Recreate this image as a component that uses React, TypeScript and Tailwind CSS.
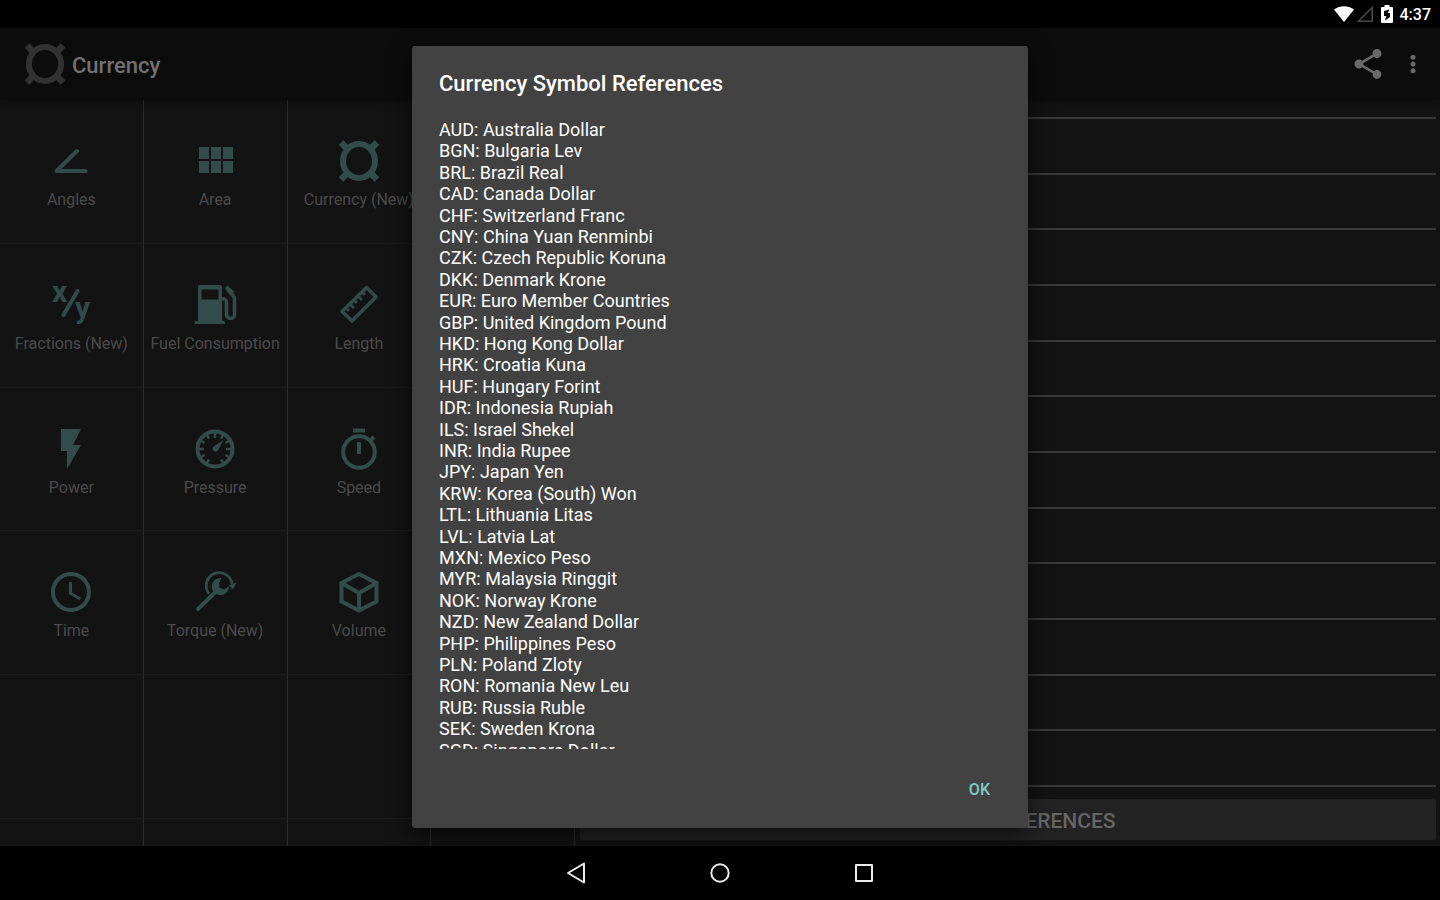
import type { ReactNode } from "react";
import { MdAccessTime, MdFlashOn, MdShare } from "react-icons/md";

const references = [
  "AUD: Australia Dollar",
  "BGN: Bulgaria Lev",
  "BRL: Brazil Real",
  "CAD: Canada Dollar",
  "CHF: Switzerland Franc",
  "CNY: China Yuan Renminbi",
  "CZK: Czech Republic Koruna",
  "DKK: Denmark Krone",
  "EUR: Euro Member Countries",
  "GBP: United Kingdom Pound",
  "HKD: Hong Kong Dollar",
  "HRK: Croatia Kuna",
  "HUF: Hungary Forint",
  "IDR: Indonesia Rupiah",
  "ILS: Israel Shekel",
  "INR: India Rupee",
  "JPY: Japan Yen",
  "KRW: Korea (South) Won",
  "LTL: Lithuania Litas",
  "LVL: Latvia Lat",
  "MXN: Mexico Peso",
  "MYR: Malaysia Ringgit",
  "NOK: Norway Krone",
  "NZD: New Zealand Dollar",
  "PHP: Philippines Peso",
  "PLN: Poland Zloty",
  "RON: Romania New Leu",
  "RUB: Russia Ruble",
  "SEK: Sweden Krona",
  "SGD: Singapore Dollar",
];

function Icon({ children }: { children: ReactNode }) {
  return (
    <svg viewBox="0 0 48 48" className="size-12 overflow-visible" fill="none" stroke="currentColor" aria-hidden="true">
      {children}
    </svg>
  );
}

function CurrencyIcon() {
  return (
    <Icon>
      <ellipse cx="24" cy="24" rx="16" ry="17" strokeWidth="6" />
      <path d="M6 5.500l6 6M42 5.500l-6 6M6 42.500l6-6M42 42.500l-6-6" strokeWidth="6.500" />
    </Icon>
  );
}

function AngleIcon() {
  return (
    <Icon>
      <path d="M30 14L9.500 34H38.500" strokeWidth="4" strokeLinecap="round" strokeLinejoin="round" />
    </Icon>
  );
}

function AreaIcon() {
  return (
    <Icon>
      <path
        d="M8 22h10V10H8zM8 36h10V24H8zM20 36h10V24H20zM32 36h10V24H32zM20 22h10V10H20zM32 10v12h10V10z"
        fill="currentColor"
        stroke="none"
      />
    </Icon>
  );
}

function FractionIcon() {
  return (
    <Icon>
      <g fill="currentColor" stroke="none" fontFamily="Roboto, sans-serif" fontWeight="700" fontSize="30">
        <text x="5" y="21">x</text>
        <text x="28" y="37">y</text>
      </g>
      <path d="M30.500 10L16.500 34" strokeWidth="4" strokeLinecap="round" />
    </Icon>
  );
}

function FuelIcon() {
  return (
    <Icon>
      <path
        fillRule="evenodd"
        d="M9 4h20a2 2 0 0 1 2 2v34h1.500a1.500 1.500 0 0 1 1.500 1.500V43H3.500v-1.500A1.500 1.500 0 0 1 5 40h2V6a2 2 0 0 1 2-2zM10.500 8.500v10h17v-10z"
        fill="currentColor"
        stroke="none"
      />
      <path d="M31 18h1.500a3 3 0 0 1 3 3v12.500a4 4 0 0 0 8 0V18.500a6 6 0 0 0-1.500-4L36 7.500" strokeWidth="3.500" />
      <path d="M34 7l2.500-2.500L43 10.500l-2 5-4-3.500z" fill="currentColor" stroke="none" />
    </Icon>
  );
}

function RulerIcon() {
  return (
    <Icon>
      <path d="M31.500 6.500L41 16 17 40 7 30.500z" strokeWidth="3.500" strokeLinejoin="round" />
      <path d="M11 27l3 3M15 23l4 4M19 19l3 3M23 15l4 4M27 11l3 3" strokeWidth="2.500" />
    </Icon>
  );
}

function GaugeIcon() {
  return (
    <Icon>
      <circle cx="24" cy="24" r="17.500" strokeWidth="4" />
      <g strokeWidth="2.500">
        <path d="M24 7v6M7 24h6M35 24h6" />
        <path d="M15.500 9.300l2.500 4.300M32.500 9.300L30 13.600M9.300 15.500l4.300 2.500M38.700 15.500L34.400 18M9.300 32.500l4.300-2.500M38.700 32.500L34.400 30M15.500 38.700l2.500-4.300M32.500 38.700L30 34.400" />
      </g>
      <path d="M32.500 15L27 25.200a2.900 2.900 0 1 1-4-4z" fill="currentColor" stroke="none" />
    </Icon>
  );
}

function TimerIcon() {
  return (
    <Icon>
      <circle cx="24" cy="27" r="15.800" strokeWidth="4" />
      <path d="M18 5.500h12M24 17v12" strokeWidth="4" />
      <path d="M34.500 16.500l4.500-4.500" strokeWidth="4" />
    </Icon>
  );
}

function TorqueIcon() {
  return (
    <Icon>
      <path d="M7 41L25 23.500" strokeWidth="4" strokeLinecap="round" />
      <path d="M18.100 25.800A13 13 0 1 1 41.200 16.500" strokeWidth="2.800" />
      <path d="M37.500 17l4-.5 4.500-2.500-4 7.500z" fill="currentColor" stroke="none" />
      <path d="M30.500 10A8.700 8.700 0 1 0 38 18.500L33 21.500 28.500 19.500 28 15z" fill="currentColor" stroke="none" />
    </Icon>
  );
}

function CubeIcon() {
  return (
    <Icon>
      <path d="M24 6l17.500 9v18.500L24 42.500l-17.500-9V15zM6.500 15L24 25l17.500-10M24 25v17" strokeWidth="4" />
    </Icon>
  );
}

const columns = 4;
const rows: { label: string; icon: ReactNode }[][] = [
  [
    { label: "Angles", icon: <AngleIcon /> },
    { label: "Area", icon: <AreaIcon /> },
    { label: "Currency (New)", icon: <CurrencyIcon /> },
  ],
  [
    { label: "Fractions (New)", icon: <FractionIcon /> },
    { label: "Fuel Consumption", icon: <FuelIcon /> },
    { label: "Length", icon: <RulerIcon /> },
  ],
  [
    { label: "Power", icon: <MdFlashOn className="size-12" /> },
    { label: "Pressure", icon: <GaugeIcon /> },
    { label: "Speed", icon: <TimerIcon /> },
  ],
  [
    { label: "Time", icon: <MdAccessTime className="size-12" /> },
    { label: "Torque (New)", icon: <TorqueIcon /> },
    { label: "Volume", icon: <CubeIcon /> },
  ],
  [],
  [],
];

function StatusBar() {
  return (
    <div className="flex h-7 shrink-0 items-center justify-end bg-black pr-[9px] text-white">
      <svg viewBox="0 0 20 16" className="h-4 w-5" fill="currentColor" aria-hidden="true">
        <path d="M0 3.500C5.500-1 14.500-1 20 3.500L10 16z" />
      </svg>
      <svg viewBox="0 0 16 16" className="ml-[3px] size-4 text-[#484848]" fill="none" stroke="currentColor" aria-hidden="true">
        <path d="M1.500 15.200L15.200 1.500v13.700z" strokeWidth="1.600" />
      </svg>
      <svg viewBox="0 0 12 18" className="ml-2 h-[18px] w-3" aria-hidden="true">
        <path d="M3.500 0h5v2H11a1 1 0 0 1 1 1v14a1 1 0 0 1-1 1H1a1 1 0 0 1-1-1V3a1 1 0 0 1 1-1h2.500z" fill="#fff" />
        <path d="M8.500 4.500L3 6v5h2.300l-1.300 4.500L9 12V8H6.700z" fill="#000" />
      </svg>
      <span className="ml-[7px] pt-0.5 text-base leading-5 font-medium">4:37</span>
    </div>
  );
}

function AppBar() {
  return (
    <header className="relative flex h-[72px] shrink-0 items-center bg-[#0c0c0c] pr-[20px] pl-[21px] shadow-[0_2px_8px_rgba(0,0,0,0.35)]">
      <span className="text-[#323232]">
        <CurrencyIcon />
      </span>
      <h1 className="ml-[3px] pt-1 text-[22px] leading-7 font-medium text-[#717171]">Currency</h1>
      <button type="button" aria-label="Share" className="ml-auto text-[#696969]">
        <MdShare className="size-9" />
      </button>
      <button type="button" aria-label="More options" className="ml-[20px] text-[#696969]">
        <svg viewBox="0 0 14 24" className="h-6 w-[14px]" fill="currentColor" aria-hidden="true">
          <circle cx="7" cy="5.200" r="2.500" />
          <circle cx="7" cy="12" r="2.500" />
          <circle cx="7" cy="18.800" r="2.500" />
        </svg>
      </button>
    </header>
  );
}

function CategoryGrid() {
  return (
    <nav className="w-2/5 overflow-hidden pr-px">
      <div className="grid grid-cols-4">
        {rows.flatMap((row, r) =>
          Array.from({ length: columns }, (_, c) => {
            const item = row[c];
            const cell = "aspect-square border-r border-b border-r-[#2d2d2d] border-b-[#1b1b1b]";
            return item ? (
              <button key={`${r}-${c}`} type="button" className={`${cell} flex flex-col items-center gap-[5px] pt-[37px]`}>
                <span className="text-[#314c49]">{item.icon}</span>
                <span className="text-base leading-5 whitespace-nowrap text-[#4b4b4b]">{item.label}</span>
              </button>
            ) : (
              <div key={`${r}-${c}`} className={cell} />
            );
          })
        )}
      </div>
    </nav>
  );
}

function ConverterPanel() {
  return (
    <main className="flex flex-1 flex-col px-1 pb-[6px]">
      <div className="h-[19px] shrink-0 border-b-2 border-[#393939]" />
      <div className="flex flex-1 flex-col">
        {Array.from({ length: 12 }, (_, i) => (
          <div key={i} className="flex-1 border-b-2 border-[#393939]" />
        ))}
      </div>
      <button type="button" className="mt-3 h-[41px] shrink-0 rounded-[3px] bg-[#232323] pt-0.5 text-[21px] leading-7 font-medium text-[#666666]">
        SYMBOL REFERENCES
      </button>
    </main>
  );
}

function ReferencesDialog() {
  return (
    <div className="absolute inset-x-0 top-7 bottom-[54px] flex justify-center py-[18px]">
      <section
        role="dialog"
        aria-labelledby="dialog-title"
        className="flex w-full max-w-[616px] flex-col rounded-[3px] bg-[#424242] text-white shadow-[0_8px_24px_rgba(0,0,0,0.6)]"
      >
        <h2 id="dialog-title" className="px-[27px] pt-6 text-[22px] leading-7 font-medium">
          Currency Symbol References
        </h2>
        <div className="mt-[21px] min-h-0 flex-1 overflow-hidden px-[27px]">
          <ul className="grid min-h-[642px] auto-rows-fr text-lg leading-[21px]">
            {references.map((line) => (
              <li key={line}>{line}</li>
            ))}
          </ul>
        </div>
        <div className="flex h-[79px] shrink-0 items-center justify-end pt-0.5 pr-[28px]">
          <button type="button" className="px-[10px] py-2 text-base leading-5 font-medium text-[#80cbc4]">
            OK
          </button>
        </div>
      </section>
    </div>
  );
}

function NavigationBar() {
  return (
    <div className="flex h-[54px] shrink-0 items-center justify-center bg-black text-[#ececec]">
      <button type="button" aria-label="Back" className="flex w-36 justify-center">
        <svg viewBox="0 0 24 24" className="size-6" fill="none" stroke="currentColor" strokeWidth="2" strokeLinejoin="round" aria-hidden="true">
          <path d="M20 2.500v19L4 12z" />
        </svg>
      </button>
      <button type="button" aria-label="Home" className="flex w-36 justify-center">
        <svg viewBox="0 0 24 24" className="size-6" fill="none" stroke="currentColor" strokeWidth="2" aria-hidden="true">
          <circle cx="12" cy="12" r="8.700" />
        </svg>
      </button>
      <button type="button" aria-label="Recent apps" className="flex w-36 justify-center">
        <svg viewBox="0 0 24 24" className="size-6" fill="none" stroke="currentColor" strokeWidth="2" strokeLinejoin="round" aria-hidden="true">
          <path d="M4 4h16v16H4z" />
        </svg>
      </button>
    </div>
  );
}

export default function App() {
  return (
    <div className="relative flex h-screen flex-col overflow-hidden bg-[#131313] font-[Roboto,sans-serif]">
      <StatusBar />
      <AppBar />
      <div className="flex min-h-0 flex-1">
        <CategoryGrid />
        <ConverterPanel />
      </div>
      <NavigationBar />
      <ReferencesDialog />
    </div>
  );
}
